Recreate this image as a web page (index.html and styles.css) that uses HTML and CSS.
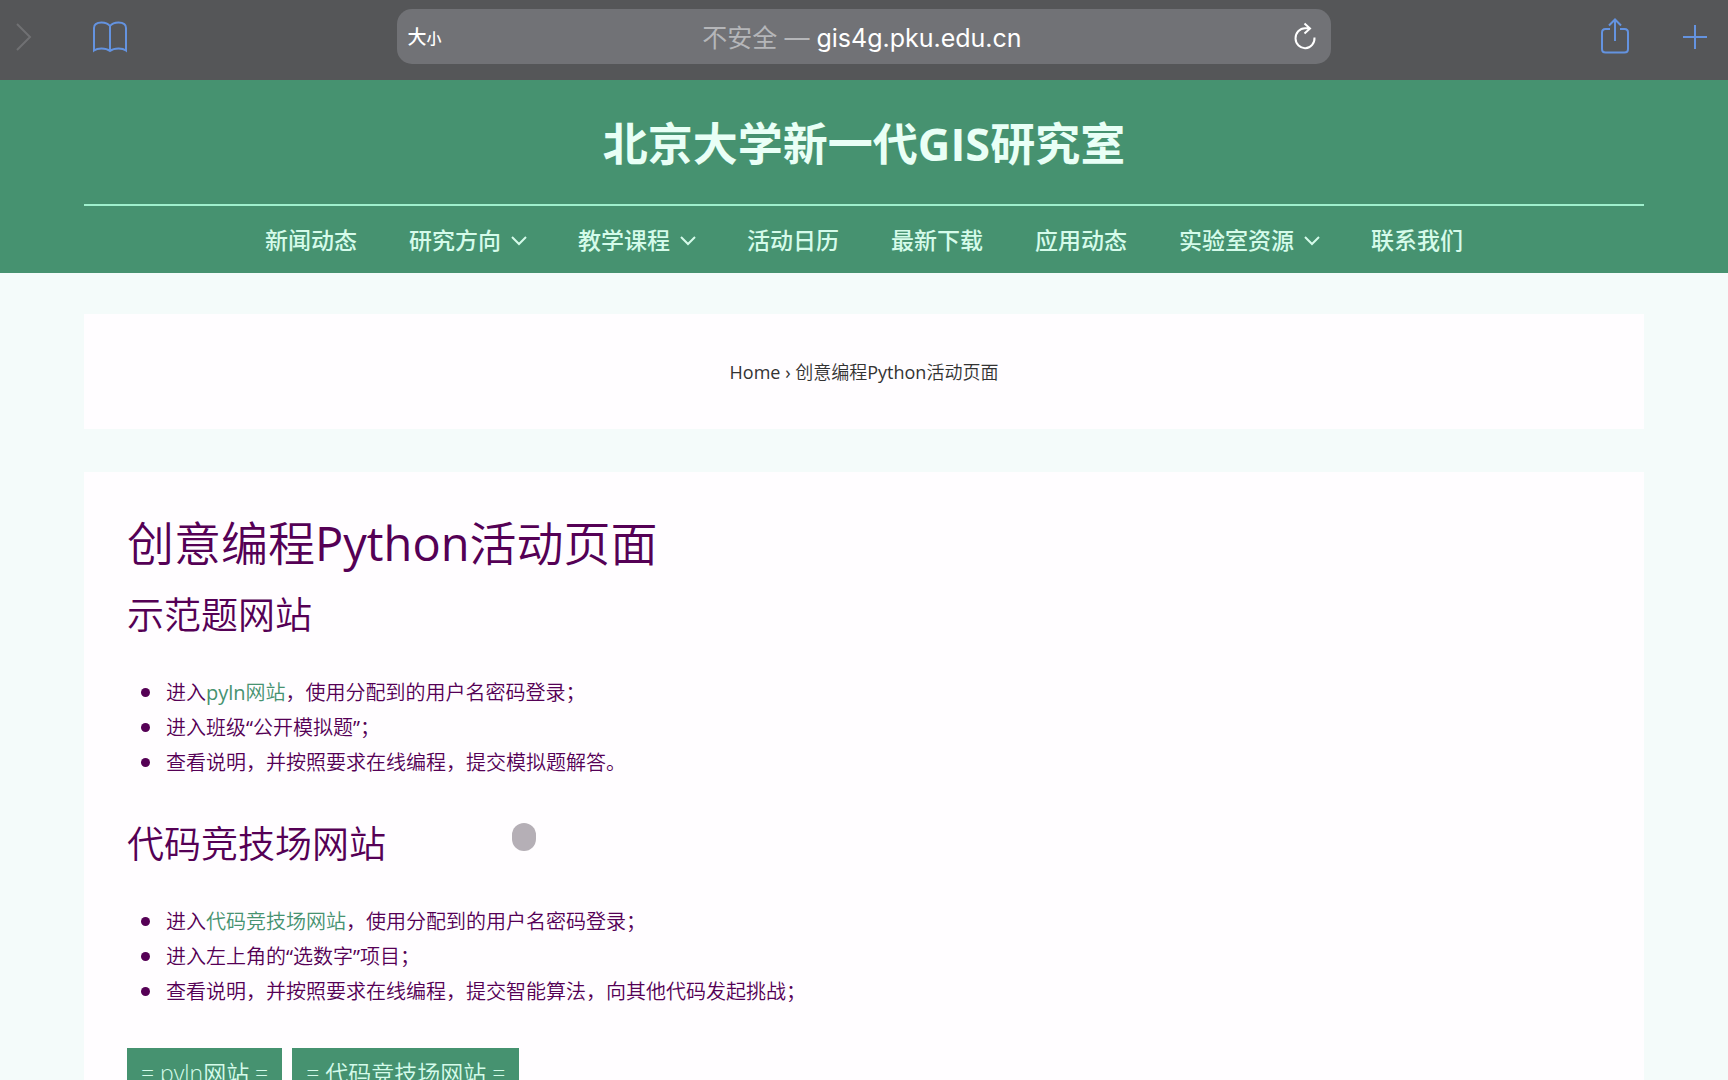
FILE: index.html
```html
<!DOCTYPE html>
<html lang="zh-CN">
<head>
<meta charset="utf-8">
<meta name="viewport" content="width=device-width, initial-scale=1">
<title>创意编程Python活动页面</title>
<link rel="stylesheet" href="styles.css">
</head>
<body>
<div class="toolbar">
  <div class="toolbar-group">
    <button class="icon-button forward" type="button" aria-label="前进" disabled>
      <svg width="16" height="30" viewBox="0 0 16 30"><path d="M1 2l13 13L1 28"/></svg>
    </button>
    <button class="icon-button" type="button" aria-label="书签">
      <svg width="36" height="32" viewBox="0 0 36 32"><path d="M18 5v24M18 5C16 2.500 13 1.500 9.500 1.500C5 1.500 2 3.500 2 7v22.500c2-1.500 4.500-2 7.500-2s6 .500 8.500 2.500c2.500-2 5.500-2.500 8.500-2.500s5.500.500 7.500 2V7c0-3.500-3-5.500-7.500-5.500C23 1.500 20 2.500 18 5z"/></svg>
    </button>
  </div>
  <div class="address">
    <button class="text-size" type="button" aria-label="文字大小"><span class="text-size-big">大</span><span class="text-size-small">小</span></button>
    <button class="location" type="button"><span class="insecure">不安全 —</span> gis4g.pku.edu.cn</button>
    <button class="icon-button reload" type="button" aria-label="重新载入">
      <svg width="24" height="28" viewBox="0 0 24 28"><path d="M21.500 15.500A9.500 10 0 1 1 12 6.200h4M11.500 1.500l5.500 5-5.500 5"/></svg>
    </button>
  </div>
  <div class="toolbar-group toolbar-end">
    <button class="icon-button" type="button" aria-label="共享">
      <svg width="30" height="38" viewBox="0 0 30 38"><path d="M10 11H5.500Q2 11 2 14.500v16.500Q2 34.500 5.500 34.500h19Q28 34.500 28 31V14.500Q28 11 24.500 11H20M15 23V1.500M9 7.500l6-6 6 6"/></svg>
    </button>
    <button class="icon-button" type="button" aria-label="新标签页">
      <svg width="26" height="26" viewBox="0 0 26 26"><path d="M13 1v24M1 13h24"/></svg>
    </button>
  </div>
</div>

<header class="site-header">
  <div class="container">
    <a class="site-title" href="#">北京大学新一代GIS研究室</a>
    <nav class="site-nav">
      <a href="#">新闻动态</a>
      <a href="#">研究方向<svg class="caret" width="14" height="14" viewBox="0 0 14 14"><path d="M0 4l7 7 7-7"/></svg></a>
      <a href="#">教学课程<svg class="caret" width="14" height="14" viewBox="0 0 14 14"><path d="M0 4l7 7 7-7"/></svg></a>
      <a href="#">活动日历</a>
      <a href="#">最新下载</a>
      <a href="#">应用动态</a>
      <a href="#">实验室资源<svg class="caret" width="14" height="14" viewBox="0 0 14 14"><path d="M0 4l7 7 7-7"/></svg></a>
      <a href="#">联系我们</a>
    </nav>
  </div>
</header>

<main class="container content">
  <div class="card breadcrumb"><a href="#">Home</a> › 创意编程Python活动页面</div>
  <article class="card article">
    <h1>创意编程Python活动页面</h1>
    <h2>示范题网站</h2>
    <ul>
      <li>进入<a href="#">pyln网站</a>，使用分配到的用户名密码登录；</li>
      <li>进入班级“公开模拟题”；</li>
      <li>查看说明，并按照要求在线编程，提交模拟题解答。</li>
    </ul>
    <h2>代码竞技场网站</h2>
    <ul>
      <li>进入<a href="#">代码竞技场网站</a>，使用分配到的用户名密码登录；</li>
      <li>进入左上角的“选数字”项目；</li>
      <li>查看说明，并按照要求在线编程，提交智能算法，向其他代码发起挑战；</li>
    </ul>
    <div class="actions">
      <button class="action" type="button">= pyln网站 =</button>
      <button class="action" type="button">= 代码竞技场网站 =</button>
    </div>
  </article>
</main>
<div class="pointer"></div>
</body>
</html>
```
FILE: styles.css
```css
* {
  box-sizing: border-box;
}

body {
  margin: 0;
  background: #f4fbfa;
  color: #550055;
  font-family: "Open Sans", "Noto Sans CJK SC", sans-serif;
  font-size: 20px;
  font-weight: 400;
}

button {
  margin: 0;
  padding: 0;
  border: 0;
  background: none;
  color: inherit;
  font: inherit;
}

a {
  color: #469270;
  text-decoration: none;
}

/* Browser toolbar */
.toolbar {
  display: grid;
  grid-template-columns: 1fr 54% 1fr;
  align-items: center;
  height: 80px;
  padding-bottom: 7px;
  background: #555658;
  font-family: Inter, "Noto Sans CJK SC", sans-serif;
}

.toolbar-group {
  display: flex;
  align-items: center;
  gap: 60px;
  padding: 0 16px;
}

.toolbar-end {
  justify-content: flex-end;
  gap: 52px;
  padding: 0 20px;
}

.icon-button {
  display: flex;
  color: #6493e0;
}

.icon-button svg,
.caret {
  fill: none;
  stroke: currentColor;
  stroke-width: 2;
}

.caret {
  overflow: visible;
}

.icon-button.forward {
  color: #707173;
}

.address {
  display: grid;
  grid-template-columns: 80px 1fr 80px;
  align-items: center;
  height: 55px;
  padding: 0 14px 2px 10px;
  border-radius: 15px;
  background: #717276;
  color: #fff;
}

.text-size {
  display: flex;
  align-items: baseline;
  font-weight: 500;
}

.text-size-big {
  font-size: 19px;
}

.text-size-small {
  font-size: 15px;
}

.location {
  font-size: 25px;
}

.insecure {
  color: #b5b6b9;
}

.icon-button.reload {
  justify-self: end;
  color: #fff;
}

/* Site header */
.container {
  margin: 0 84px;
}

.site-header {
  display: flow-root;
  background: #469270;
}

.site-title {
  display: block;
  padding: 32px 0 28px;
  border-bottom: 2px solid #9ff0cd;
  color: #e9fff6;
  font-size: 45px;
  font-weight: 700;
  line-height: 64px;
  text-align: center;
}

.site-nav {
  display: flex;
  justify-content: center;
  gap: 52px;
  padding: 16px 0 15px;
}

.site-nav a {
  display: flex;
  align-items: center;
  gap: 11px;
  color: #d5fbea;
  font-size: 23px;
  font-weight: 500;
  line-height: 36px;
}

/* Page content */
.content {
  display: grid;
  gap: 43px;
  padding: 41px 0;
  font-family: "Open Sans", "Noto Sans CJK SC DemiLight", "Noto Sans CJK SC Light", "Noto Sans CJK SC", sans-serif;
}

.card {
  background: #fffdff;
}

.breadcrumb {
  padding: 43px 42px 41px;
  color: #333;
  font-size: 18px;
  line-height: 31px;
  text-align: center;
}

.breadcrumb a {
  color: inherit;
}

.article {
  padding: 42px 43px;
}

h1,
h2 {
  margin: 0;
  font-weight: 400;
}

h1 {
  margin-bottom: 18px;
  font-size: 47px;
  line-height: 58px;
}

h2 {
  font-size: 37px;
  line-height: 50px;
}

ul {
  margin: 35px 0 39px;
  padding-left: 39px;
  list-style: none;
}

li {
  line-height: 35px;
}

li::before {
  content: "";
  display: inline-block;
  width: 9px;
  height: 9px;
  margin-left: -25px;
  margin-right: 16px;
  border-radius: 50%;
  background: currentColor;
  vertical-align: 3px;
}

.actions {
  display: flex;
  gap: 10px;
}

.action {
  padding: 0 14px;
  background: #469270;
  color: #d5fbea;
  font-size: 23px;
  font-weight: 300;
  line-height: 50px;
}

/* Touch pointer floating over the page */
.pointer {
  position: absolute;
  top: 823px;
  left: 512px;
  width: 24px;
  height: 28px;
  border-radius: 12px;
  background: #b5afb6;
}
```
